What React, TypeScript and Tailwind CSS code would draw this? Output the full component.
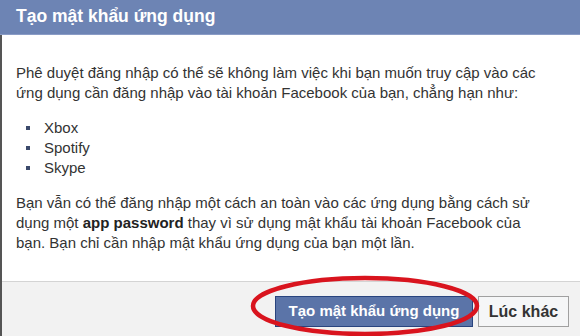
export default function App() {
  return (
    <div className="relative w-[580px] h-[336px] overflow-hidden bg-white font-['Liberation_Sans',Arial,sans-serif]">
      <div className="h-[35px] bg-[#6d84b4] border-b border-[#8a9cc6] flex items-center pl-4">
        <span className="text-white font-bold text-[17.5px] leading-none">Tạo mật khẩu ứng dụng</span>
      </div>
      <div className="border-l-2 border-[#555] h-[301px] flex flex-col">
        <div className="flex-1 px-[14px] pt-[28px] text-[15px] leading-[20px] text-[#333]">
          <p>
            Phê duyệt đăng nhập có thể sẽ không làm việc khi bạn muốn truy cập vào các ứng dụng cần đăng nhập vào tài khoản Facebook của bạn, chẳng hạn như:
          </p>
          <ul className="mt-[15px] pl-[10px]">
            {["Xbox", "Spotify", "Skype"].map((t) => (
              <li key={t} className="flex items-center gap-[14px]">
                <span className="w-[4px] h-[4px] bg-[#3b4a6b]" />
                {t}
              </li>
            ))}
          </ul>
          <p className="mt-[15px]">
            Bạn vẫn có thể đăng nhập một cách an toàn vào các ứng dụng bằng cách sử dụng một <b className="text-[#222]">app password</b> thay vì sử dụng mật khẩu tài khoản Facebook của
            <br />
            bạn. Bạn chỉ cần nhập mật khẩu ứng dụng của bạn một lần.
          </p>
        </div>
        <div className="h-[55px] bg-[#f2f2f2] border-t border-[#d4d4d4] flex items-start justify-end gap-[5px] pr-[11px] pt-[14px]">
          <button className="h-[31px] px-[8px] bg-[#5b74a8] border border-[#29447e] text-white font-bold text-[15px] w-[198px]">
            Tạo mật khẩu ứng dụng
          </button>
          <button className="h-[31px] px-[6px] bg-[#f5f6f7] border border-[#a0a0a0] text-[#333] font-bold text-[16px] w-[91px]">
            Lúc khác
          </button>
        </div>
      </div>
      <svg className="absolute left-0 top-0 pointer-events-none" width="580" height="336">
        <ellipse cx="365" cy="306" rx="112" ry="28" fill="none" stroke="#d9141e" strokeWidth="4.5" />
      </svg>
    </div>
  );
}
